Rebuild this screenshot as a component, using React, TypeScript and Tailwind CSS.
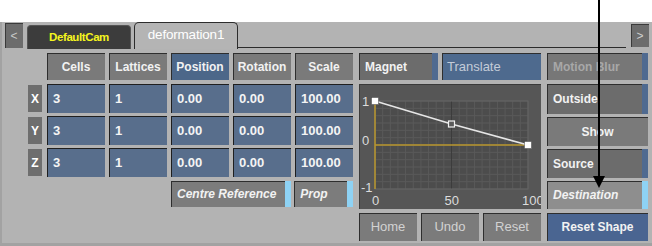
import React from 'react';

const FONT = "font-['Liberation_Sans',Arial,sans-serif]";

const GridGraph: React.FC = () => {
  // grid area in panel coordinates
  const x0 = 16;
  const x1 = 169;
  const y0 = 17;
  const y1 = 105;
  const cols = 20;
  const rows = 12;
  const vLines = Array.from({ length: cols + 1 }, (_, i) => x0 + ((x1 - x0) * i) / cols);
  const hLines = Array.from({ length: rows + 1 }, (_, i) => y0 + ((y1 - y0) * i) / rows);
  const midX = (x0 + x1) / 2;
  const zeroY = (y0 + y1) / 2;
  const pts = [
    [x0, y0],
    [midX, y0 + 23],
    [x1, zeroY],
  ];

  return (
    <svg width="182" height="125" viewBox="0 0 182 125" className="block">
      <rect x={x0} y={y0} width={x1 - x0} height={y1 - y0} fill="#4c4c4c" />
      {vLines.map((x, i) => (
        <line key={'v' + i} x1={x} y1={y0} x2={x} y2={y1} stroke="#5a5a5a" strokeWidth="1" />
      ))}
      {hLines.map((y, i) => (
        <line key={'h' + i} x1={x0} y1={y} x2={x1} y2={y} stroke="#5a5a5a" strokeWidth="1" />
      ))}
      <line x1={midX} y1={y0} x2={midX} y2={y1} stroke="#3c3c3c" strokeWidth="1" />
      <rect x={x0} y={y0} width={x1 - x0} height={y1 - y0} fill="none" stroke="#646464" strokeWidth="1" />

      {/* axes */}
      <line x1={x0} y1={zeroY} x2={x1} y2={zeroY} stroke="#b8962c" strokeWidth="1.5" />
      <line x1={x0} y1={y0} x2={x0} y2={y1} stroke="#b8962c" strokeWidth="1.5" />

      {/* curve */}
      <polyline
        points={pts.map((p) => p.join(',')).join(' ')}
        fill="none"
        stroke="#e6e6e6"
        strokeWidth="1.6"
      />
      <rect x={x0 - 3.5} y={y0 - 3.5} width="7" height="7" fill="#ffffff" stroke="#444" strokeWidth="0.5" />
      <rect x={midX - 3} y={y0 + 23 - 3} width="6" height="6" fill="#5a5a5a" stroke="#f0f0f0" strokeWidth="1.2" />
      <rect x={x1 - 3.5} y={zeroY - 3.5} width="7" height="7" fill="#ffffff" stroke="#444" strokeWidth="0.5" />

      {/* labels */}
      <g fill="#dcdcdc" fontFamily="'Liberation Sans', Arial, sans-serif" fontSize="13">
        <text x="3" y="22">1</text>
        <text x="3" y="61">0</text>
        <text x="2" y="108">-1</text>
        <text x={x0 - 3} y="121">0</text>
        <text x={midX - 7} y="121">50</text>
        <text x={x1 - 6} y="121">100</text>
      </g>
    </svg>
  );
};

const Btn: React.FC<{
  label: string;
  className?: string;
  text?: string;
  strip?: string;
  italic?: boolean;
  center?: boolean;
}> = ({ label, className = '', text = 'text-[12px] font-bold text-[#f2f2f2]', strip, italic, center = true }) => (
  <div className={`flex items-stretch shadow-[inset_1px_1px_0_#2e2e2e] ${className}`}>
    <div
      className={`flex flex-1 items-center ${center ? 'justify-center' : 'justify-start pl-[6px]'} ${text} ${
        italic ? 'italic' : ''
      }`}
    >
      {label}
    </div>
    {strip && <div className={`w-[6px] ${strip}`} />}
  </div>
);

const Field: React.FC<{ value: string }> = ({ value }) => (
  <div className="flex items-center pl-[6px] bg-[#586e8c] shadow-[inset_1px_1px_0_#1f1f1f] text-[13px] font-bold text-[#f4f4f4]">
    {value}
  </div>
);

const rows = [
  { axis: 'X', vals: ['3', '1', '0.00', '0.00', '100.00'] },
  { axis: 'Y', vals: ['3', '1', '0.00', '0.00', '100.00'] },
  { axis: 'Z', vals: ['3', '1', '0.00', '0.00', '100.00'] },
];

export default function App() {
  return (
    <div className={`relative w-[652px] h-[246px] bg-white overflow-hidden ${FONT}`}>
      <div className="h-[22px]" />
      <div className="h-[224px] bg-[#b3b3b3] border-l-2 border-b-[3px] border-[#a2a2a2] flex flex-col">
        {/* tab strip */}
        <div className="flex items-end h-[27px] pl-[3px] pr-[3px]">
          <div className="self-start mt-[1px] w-[18px] h-[25px] bg-[#6c6c6c] shadow-[inset_1px_1px_0_#3a3a3a] flex items-center justify-center text-[12px] text-[#c8c8c8]">
            &lt;
          </div>
          <div className="ml-[4px] w-[104px] h-[24px] bg-[#3c3c3c] rounded-t-[4px] border border-b-0 border-[#555] flex items-center justify-center text-[11.5px] font-bold tracking-[-0.4px] text-[#f5f51e]">
            DefaultCam
          </div>
          <div className="ml-[3px] w-[104px] h-[27px] bg-[#b4b4b4] rounded-t-[5px] border border-b-0 border-[#2c2c2c] flex items-center justify-center text-[13.5px] tracking-[-0.2px] text-white pb-[1px]">
            deformation1
          </div>
          <div className="flex-1 h-full border-b border-[#2c2c2c] mb-[1px]" />
          <div className="self-center ml-[5px] w-[18px] h-[23px] bg-[#6c6c6c] shadow-[inset_1px_1px_0_#3a3a3a] flex items-center justify-center text-[12px] text-[#d0d0d0]">
            &gt;
          </div>
        </div>

        {/* content */}
        <div className="flex pt-[4px] pl-[25px]">
          {/* left table */}
          <div className="flex flex-col w-[326px]">
            <div className="grid grid-cols-[16px_repeat(5,58px)] gap-x-[4px] h-[27px]">
              <div />
              {['Cells', 'Lattices', 'Position', 'Rotation', 'Scale'].map((h) => (
                <Btn
                  key={h}
                  label={h}
                  className={h === 'Position' ? 'bg-[#4c6789]' : 'bg-[#7a7a7a]'}
                />
              ))}
            </div>
            <div className="flex flex-col gap-[3px] mt-[4px]">
              {rows.map((r) => (
                <div key={r.axis} className="grid grid-cols-[16px_repeat(5,58px)] gap-x-[4px] h-[29px]">
                  <div className="flex items-center justify-center bg-[#6e6e6e] text-[12px] font-bold text-white m-[1px]">
                    {r.axis}
                  </div>
                  {r.vals.map((v, i) => (
                    <Field key={i} value={v} />
                  ))}
                </div>
              ))}
            </div>
            <div className="flex gap-[3px] mt-[4px] h-[26px] pl-[144px]">
              <Btn
                label="Centre Reference"
                className="w-[121px] bg-[#7c7c7c]"
                italic
                center={false}
                strip="bg-[#8ed2f4]"
              />
              <Btn
                label="Prop"
                className="w-[59px] bg-[#7c7c7c]"
                italic
                center={false}
                strip="bg-[#8ed2f4]"
              />
            </div>
          </div>

          {/* middle */}
          <div className="ml-[6px] flex flex-col w-[182px]">
            <div className="flex gap-[4px] h-[27px]">
              <Btn
                label="Magnet"
                className="w-[79px] bg-[#6c6c6c]"
                center={false}
                strip="bg-[#4f6a90]"
              />
              <div className="flex-1 flex items-center pl-[5px] bg-[#4e6a8e] shadow-[inset_1px_1px_0_#2e2e2e] text-[13px] text-[#c4ccd8]">
                Translate
              </div>
            </div>
            <div className="mt-[4px] h-[125px] bg-[#565656] shadow-[inset_1px_1px_0_#3a3a3a]">
              <GridGraph />
            </div>
            <div className="flex gap-[4px] mt-[4px] h-[28px]">
              {['Home', 'Undo', 'Reset'].map((b) => (
                <Btn key={b} label={b} className="flex-1 bg-[#7b7b7b]" text="text-[13px] text-[#d2d2d2]" />
              ))}
            </div>
          </div>

          {/* right column */}
          <div className="ml-[6px] flex flex-col w-[101px]">
            <Btn
              label="Motion Blur"
              className="h-[27px] bg-[#777777]"
              text="text-[12px] font-bold text-[#a8a8a8]"
              center={false}
              strip="bg-[#4f6a90]"
            />
            <Btn
              label="Outside"
              className="h-[30px] mt-[4px] bg-[#6c6c6c]"
              center={false}
              strip="bg-[#4f6a90]"
            />
            <Btn label="Show" className="h-[29px] mt-[3px] bg-[#7a7a7a]" />
            <Btn
              label="Source"
              className="h-[29px] mt-[3px] bg-[#6c6c6c]"
              center={false}
              strip="bg-[#4f6a90]"
            />
            <Btn
              label="Destination"
              className="h-[28px] mt-[3px] bg-[#8e8e8e]"
              italic
              center={false}
              strip="bg-[#8ed2f4]"
            />
            <Btn label="Reset Shape" className="h-[28px] mt-[4px] bg-[#4a6591]" />
          </div>
        </div>
      </div>

      {/* annotation arrow */}
      <svg className="absolute left-0 top-0 pointer-events-none" width="652" height="246">
        <line x1="599" y1="0" x2="599" y2="178" stroke="#000" strokeWidth="2" />
        <polygon points="593,176 605,176 599,188" fill="#000" />
      </svg>
    </div>
  );
}
